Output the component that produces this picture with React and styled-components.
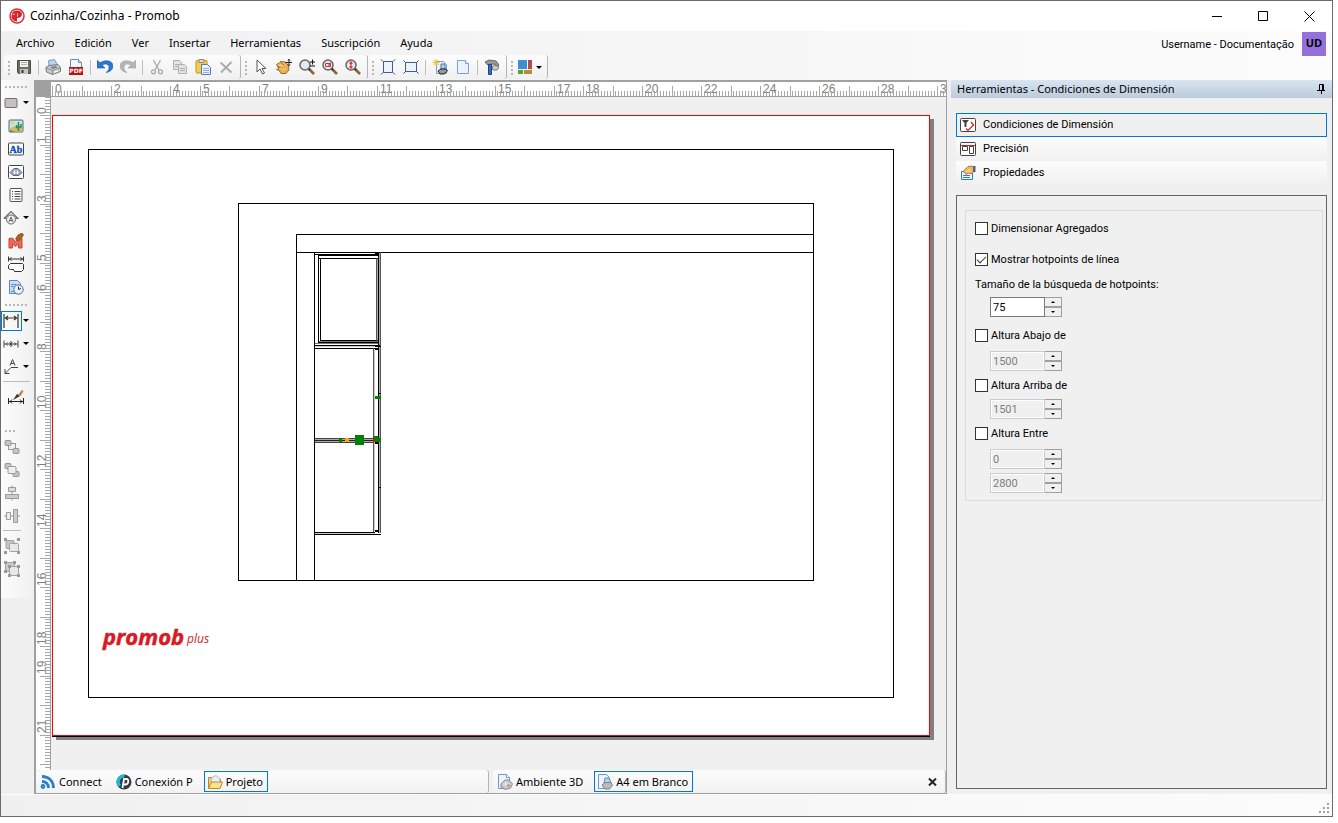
import React, { useState } from "react";
import styled, { createGlobalStyle, css } from "styled-components";

const GlobalStyle = createGlobalStyle`
  *, *::before, *::after {
    box-sizing: border-box;
  }
  body {
    margin: 0;
    background: #fff;
    color: #000;
    font: 11px/16px "Noto Sans", "Open Sans", sans-serif;
  }
  button, input {
    font: inherit;
    color: inherit;
  }
`;

const Page = styled.div`
  display: flex;
  min-height: 100vh;
  padding: 0 5px 6px 0;
`;

const Window = styled.main`
  flex: 1;
  min-width: 0;
  display: flex;
  flex-direction: column;
  border: 1px solid #6b6b6b;
  background: #f0f0f0;
`;

const TitleBar = styled.header`
  display: flex;
  align-items: center;
  height: 30px;
  padding-left: 8px;
  background: #fff;
`;

const Title = styled.h1`
  flex: 1;
  margin: 0 0 0 5px;
  font-size: 12px;
  font-weight: normal;
`;

const WindowButton = styled.button`
  display: grid;
  place-items: center;
  width: 46px;
  height: 30px;
  padding: 0;
  border: 0;
  background: none;
`;

const TopArea = styled.div`
  display: flex;
  justify-content: space-between;
  height: 49px;
  background: linear-gradient(90deg, #f0f0f0, #fcfcfc);
`;

const MenuBar = styled.nav`
  display: flex;
  height: 24px;
  padding-left: 5px;
`;

const MenuItem = styled.button`
  padding: 0 10px;
  border: 0;
  background: none;
  white-space: nowrap;
`;

const User = styled.div`
  display: flex;
  align-items: flex-start;
  gap: 8px;
  padding: 1px 6px 0 0;
  font: 11px/26px Roboto, "Liberation Sans", sans-serif;
`;

const Avatar = styled.span`
  width: 24px;
  height: 24px;
  background: #9370db;
  font: bold 11px/22px "Open Sans", sans-serif;
  text-align: center;
`;

const ToolRow = styled.div`
  display: flex;
  height: 25px;
  padding: 0 0 1px 3px;
`;

const ToolGroup = styled.div`
  display: flex;
  align-items: center;
  padding: 0 3px 0 8px;
  border-right: 1px solid #b4b4b4;
  border-radius: 3px;
  background: linear-gradient(#fcfcfc, #f0f0f0) no-repeat;
  position: relative;

  &::before {
    content: "";
    position: absolute;
    left: 4px;
    top: 6px;
    width: 2px;
    height: 14px;
    background: repeating-linear-gradient(#b8b8b8 0 2px, transparent 2px 4px);
  }
`;

const ToolButton = styled.button`
  display: flex;
  align-items: center;
  justify-content: center;
  gap: 3px;
  width: ${props => props.$width || 23}px;
  height: 23px;
  padding: 0;
  border: 0;
  background: none;
`;

const ToolSeparator = styled.span`
  width: 1px;
  height: 15px;
  margin: 0 2px 0 3px;
  background: #bdbdbd;
`;

const Caret = styled.span`
  border: 3px solid transparent;
  border-top-color: #000;
  border-bottom: 0;
`;

const Body = styled.div`
  flex: 1;
  min-height: 0;
  display: flex;
`;

const SideTools = styled.aside`
  width: 33px;
  flex: none;
`;

const SideGroup = styled.div`
  position: relative;
  padding: 11px 0 ${props => props.$bottom}px;
  border-radius: 0 3px 3px 0;
  background: linear-gradient(90deg, #fcfcfc, #f0f0f0);

  &:not(:first-child) {
    padding-top: 9px;
  }
  &::before {
    content: "";
    position: absolute;
    left: 4px;
    top: ${props => (props.$first ? 6 : 4)}px;
    width: ${props => props.$grip}px;
    height: 2px;
    background: repeating-linear-gradient(90deg, #b8b8b8 0 2px, transparent 2px 4px);
  }
`;

const SideButton = styled.button`
  display: flex;
  align-items: center;
  width: 32px;
  height: 23px;
  padding: 0;
  border: 0;
  background: none;
  ${props =>
    props.$menu &&
    css`
      gap: 1px;
    `}
  ${props =>
    !props.$menu &&
    css`
      padding-left: ${props.$left ? 3 : 7}px;
    `}
`;

const SideIcon = styled.span`
  display: flex;
  align-items: center;
  justify-content: center;
  width: 21px;
  height: 20px;
  padding-right: 2px;
  border: 1px solid ${props => (props.$selected ? "#0078d7" : "transparent")};
`;

const SideSeparator = styled.hr`
  width: ${props => props.$width}px;
  margin: 3px 2px;
  border: 0;
  border-top: 1px solid #bdbdbd;
`;

const Workspace = styled.section`
  flex: 1;
  min-width: 0;
  display: grid;
  grid-template-columns: 15px minmax(0, 1fr);
  grid-template-rows: 15px minmax(0, 1fr) 23px;
  margin-right: 4px;
  border: solid #a0a0a0;
  border-width: 2px 1px 1px 2px;
`;

const RulerCorner = styled.div`
  background: #a0a0a0;
`;

const RulerSvg = styled.svg`
  display: block;
  width: 100%;
  height: 100%;
  overflow: hidden;
  background: #fff;
  border: 0 solid #a0a0a0;
  border-bottom-width: ${props => (props.$vertical ? 0 : 1)}px;
  border-right-width: ${props => (props.$vertical ? 1 : 0)}px;
  font: 12px "Liberation Sans", Arial, sans-serif;
`;

const Canvas = styled.div`
  display: flex;
  padding: 18px 16px 34px 1px;
`;

const Sheet = styled.div`
  flex: 1;
  min-width: 0;
  border: 1px solid #f00;
  background: #fff;
  box-shadow: 0 1px 0 #000, 4px 4px 0 #808080;

  svg {
    display: block;
    width: 100%;
    height: 100%;
  }
`;

const DocTabs = styled.div`
  grid-column: 1 / -1;
  display: flex;
  gap: 4px;
`;

const DocTabGroup = styled.div`
  flex: 1;
  display: flex;
  align-items: center;
  gap: 6px;
  padding: 0 8px 0 1px;
  border-right: 1px solid #b4b4b4;
  border-radius: 3px;
  background: linear-gradient(#fcfcfc, #f2f2f2);
`;

const DocTab = styled.button`
  display: flex;
  align-items: center;
  gap: 3px;
  height: 21px;
  padding: 0 4px 0 2px;
  border: 1px solid ${props => (props.$active ? "#0078d7" : "transparent")};
  background: none;
  white-space: nowrap;
`;

const CloseDoc = styled.button`
  display: flex;
  margin-left: auto;
  padding: 0;
  border: 0;
  background: none;
`;

const Panel = styled.aside`
  flex: none;
  display: flex;
  flex-direction: column;
  width: 381px;
`;

const PanelHeader = styled.div`
  display: flex;
  align-items: center;
  justify-content: space-between;
  height: 18px;
  padding: 0 6px;
  background: linear-gradient(#d8e4f1, #bccbda);
`;

const PanelTitle = styled.h2`
  margin: 0;
  font-size: 11px;
  font-weight: normal;
`;

const PinButton = styled.button`
  display: flex;
  padding: 0;
  border: 0;
  background: none;
`;

const PanelTabs = styled.div`
  margin: 15px 5px 10px;
`;

const PanelTab = styled.button`
  display: flex;
  align-items: center;
  gap: 7px;
  width: 100%;
  height: 24px;
  padding: 0 3px;
  border: 1px solid ${props => (props.$active ? "#0078d7" : "transparent")};
  background: ${props =>
    props.$active ? "#f0f0f0" : "linear-gradient(#fcfcfc, #f0f0f0) border-box"};
  font: 11px/16px Roboto, "Liberation Sans", sans-serif;
  text-align: left;
`;

const PanelBody = styled.div`
  flex: 1;
  margin: 0 5px 5px;
  padding: 14px 3px 14px 8px;
  border: 1px solid #646464;
`;

const Group = styled.fieldset`
  min-width: 0;
  margin: 0;
  padding: 8px 9px 7px;
  border: 1px solid #dcdcdc;
  font: 11px/14px Roboto, "Liberation Sans", sans-serif;
`;

const CheckLabel = styled.label`
  display: flex;
  align-items: center;
  gap: 3px;
  height: 19px;
  margin-top: ${props => props.$gap || 0}px;
`;

const CheckInput = styled.input`
  appearance: none;
  display: grid;
  place-items: center;
  width: 13px;
  height: 13px;
  margin: 0;
  border: 1px solid #333;
  background: #fff;

  &:checked::before {
    content: "";
    width: 9px;
    height: 5px;
    margin-top: -3px;
    border: solid #333;
    border-width: 0 0 1px 1px;
    transform: rotate(-45deg);
  }
`;

const FieldLabel = styled.label`
  display: block;
  margin-top: 9px;
`;

const Spinner = styled.div`
  display: grid;
  grid-template: 10px 10px / 55px 17px;
  margin: ${props => props.$gap}px 0 0 15px;
`;

const SpinnerInput = styled.input`
  grid-row: 1 / 3;
  min-width: 0;
  padding: 1px 2px 0;
  border: 1px solid #7a7a7a;
  border-radius: 0;
  background: #fff;
  font-size: 11px;

  &:disabled {
    border-color: #ccc;
    background: #f0f0f0;
    box-shadow: inset 0 0 0 1px #fff;
    color: #7d7d7d;
  }
`;

const SpinnerButton = styled.button`
  display: grid;
  place-items: center;
  padding: 0;
  border: 1px solid #a0a0a0;
  border-left: 0;
  background: #f0f0f0;

  &::before {
    content: "";
    border: 2px solid transparent;
    border-bottom-color: ${props => (props.$down ? "transparent" : "#000")};
    border-top-color: ${props => (props.$down ? "#000" : "transparent")};
    border-top-width: ${props => (props.$down ? 2 : 0)}px;
    border-bottom-width: ${props => (props.$down ? 0 : 2)}px;
  }
`;

const StatusBar = styled.footer`
  display: flex;
  align-items: flex-end;
  justify-content: flex-end;
  height: 22px;
  padding: 2px 2px 2px 0;
  border-top: 1px solid #fff;
  background: linear-gradient(90deg, #f0f0f0, #fcfcfc);
`;

const printer = (
  <>
    <path d="M4 7 3.500 1.500 9.500.5l3 5.500" fill="#b9d5f5" stroke="#7b9cc4" />
    <path d="M.8 8.500 4 6.500l9-1 2.500 3v4l-8 3-6-2.500z" fill="#c9cacc" stroke="#77797c" />
    <path d="M1 9l6.500 2.500L15 9M7.500 11.500V15" stroke="#8b8d90" fill="none" />
    <path d="M5 8l6-1 1.500 1.500-5 1.500z" fill="#7b7f84" />
    <path d="M9 12.500l4-1.500v1.500l-4 1.500z" fill="#f5f5f5" />
  </>
);

const lens = (
  <>
    <path d="M10 10l5 5" stroke="#8a6538" strokeWidth="2.600" />
    <path d="M9.500 9.500l1.500 1.500" stroke="#333" strokeWidth="2" />
    <circle cx="6" cy="6" r="5" fill="#e4ebf0" stroke="#666" strokeWidth="1.500" />
  </>
);

const docShape = (
  <>
    <path d="M2.500 1.500h8l3 3v10h-11z" fill="#eaf2fc" stroke="#7f9fd0" />
    <path d="M10.500 1.500v3h3" fill="#fff" stroke="#7f9fd0" />
  </>
);

const shapes = {
  logo: (
    <>
      <circle cx="8" cy="8" r="7" fill="#fff" stroke="#d9303a" strokeWidth="1.500" />
      <path d="M8 2.500a5.500 5.500 0 0 0-2.500 10.400L8 13.500V10c3 0 5-1.500 5-4 0-2-2-3.500-5-3.500z" fill="#d7262f" />
      <path d="M3.500 6l2.500.5M8.500 5.500v3" stroke="#f6b9bc" fill="none" />
    </>
  ),
  save: (
    <>
      <path d="M1.500 1.500h13v13h-12l-1-1z" fill="#6d6d64" stroke="#4a4a44" />
      <path d="M4 2h8v6H4z" fill="#f1f3ef" />
      <path d="M5 3.500h6M5 5.500h6" stroke="#aeb4ac" />
      <path d="M4 10h8v5H4z" fill="#c4c7c0" />
      <path d="M5.500 11h2v3h-2z" fill="#333" />
    </>
  ),
  print: printer,
  pdf: (
    <>
      <path d="M2.500.5h8l3 3v8h-11z" fill="#f3f8ff" stroke="#5b8fc8" />
      <path d="M10.500.5v3h3" fill="#cfe0f5" stroke="#5b8fc8" />
      <path d="M1 8h14v8H1z" fill="#c01010" />
      <text x="8" y="14" fontSize="6" fontWeight="bold" fontFamily="DejaVu Sans" textAnchor="middle" fill="#fff">PDF</text>
    </>
  ),
  undo: (
    <path d="M0 1v8h8L5.500 6.500C8 4 12 5 12 8.500c0 2.500-1.500 4-3 5 4-.5 7-3 7-6.500C16 2 9 0 3 3.800z" fill="#2b78cf" stroke="#1c5ca8" strokeWidth=".6" />
  ),
  redo: (
    <path d="M16 1v8H8l2.500-2.500C8 4 4 5 4 8.500c0 2.500 1.500 4 3 5C3 13 0 10.500 0 7 0 2 7 0 13 3.800z" fill="#b5b5b5" stroke="#a2a2a2" strokeWidth=".6" />
  ),
  cut: (
    <g fill="none" stroke="#aaa" strokeWidth="1.300">
      <path d="M4.500 1l5.500 10M11.500 1L6 11" />
      <circle cx="4.500" cy="12.800" r="2" />
      <circle cx="11.500" cy="12.800" r="2" />
    </g>
  ),
  copy: (
    <g fill="#e3e3e3" stroke="#b0b0b0">
      <path d="M1.500 1.500h6l2 2v7h-8z" />
      <path d="M6.500 5.500h6l2 2v7h-8z" />
      <path d="M8 9.500h5M8 11.500h5M3 5.500h3M3 7.500h3" />
    </g>
  ),
  paste: (
    <>
      <rect x="1" y="1.500" width="11" height="12.500" rx="1" fill="#f4cd4b" stroke="#c59225" />
      <path d="M4 .5h5v3H4z" fill="#ddd" stroke="#888" />
      <path d="M6.500 5.500h6l3 3v7h-9z" fill="#e9f2fd" stroke="#5979b7" />
      <path d="M8 9.500h6M8 11.500h6M8 13.500h6" stroke="#91afe0" />
    </>
  ),
  remove: <path d="M2.500 3.500l11 10M13.500 3L3 13.500" stroke="#aaa" strokeWidth="1.800" fill="none" />,
  pointer: <path d="M4 1v12l3-3 2.500 5 2-1L9 9.500h4z" fill="#fff" stroke="#555" />,
  hand: (
    <>
      <path d="M.5 5.500l3-1.500 1-1.500 5 .5 3 4 .5 4-3 3.500H5L3 11.500.5 10.500 3 9.500z" fill="#eaae50" stroke="#96601c" strokeWidth=".9" />
      <path d="M2 6l4 1.500M3.500 4.500L7.500 7M6 3.500L9 6.500M3.500 9.500L6 9M6 12l4-3" stroke="#f9d898" fill="none" />
      <path d="M1.500 7.500L5 8.500M4.500 3.500L8 6" stroke="#7d4d14" strokeWidth=".7" fill="none" />
      <path d="M13 0v7M9.500 3.500h7M12 1.500l1-1 1 1M12 5.500l1 1 1-1" stroke="#222" fill="none" />
    </>
  ),
  zoomBoth: (
    <>
      {lens}
      <path d="M11 3h5M13.500.5v5M11 7h5" stroke="#111" fill="none" />
    </>
  ),
  zoomArea: (
    <>
      {lens}
      <path d="M3.500 4.500h5v3h-5zM6 6h3M8 3.500v3" stroke="#c33" fill="none" />
    </>
  ),
  zoomFit: (
    <>
      {lens}
      <path d="M6 3v6M4.500 4.500L6 3l1.500 1.500M4.500 7.500L6 9l1.500-1.500" stroke="#e33" strokeWidth="1.300" fill="none" />
    </>
  ),
  frameTall: (
    <>
      <path d="M3.500 2.500h9v11h-9z" fill="#eef3fb" stroke="#3d5d94" />
      <path d="M1 .5l2 2M15 .5l-2 2M1 15.500l2-2M15 15.500l-2-2" stroke="#253f70" />
    </>
  ),
  frameWide: (
    <>
      <path d="M2.500 3.500h11v9h-11z" fill="#eef3fb" stroke="#3d5d94" />
      <path d="M.5 1.500l2 2M15.500 1.500l-2 2M.5 14.500l2-2M15.500 14.500l-2-2" stroke="#253f70" />
    </>
  ),
  newView: (
    <>
      <path d="M4.500 2.500h7l3 3v9h-10z" fill="#e8f1fc" stroke="#7f9fd0" />
      <path d="M4 0v7M.5 3.500h7M1.500 1l5 5M6.500 1l-5 5" stroke="#edc52c" />
      <path d="M9 5h4v5H9z" fill="#b9d0ef" stroke="#536f9c" />
      <path d="M6 12l3-2h5l1.500 2-3.500 3H8z" fill="#999" stroke="#222" />
    </>
  ),
  doc: docShape,
  hammer: (
    <>
      <path d="M1 3l4-2 7 1 3 4-2 1-2-2-8 .5z" fill="#999" stroke="#666" />
      <path d="M8 8l3-2 4 2-2 3H9z" fill="#ccc" stroke="#777" />
      <path d="M4.500 5.500h3v10h-3z" fill="#3b6ac0" stroke="#1d4288" />
    </>
  ),
  colors: (
    <>
      <path d="M1 1h9v9H1z" fill="#3e8ed3" />
      <path d="M11 1h4v9h-4z" fill="#b9484b" />
      <path d="M1 11h5v4H1z" fill="#53a52d" />
      <path d="M7 11h8v4H7z" fill="#b98a3e" />
    </>
  ),
  box: <rect x="2" y="3.500" width="12" height="9" rx="1" fill="#c4c2bf" stroke="#707070" />,
  image: (
    <>
      <rect x="1" y="2" width="14" height="12" rx="1" fill="#bfe3f8" stroke="#567" />
      <circle cx="4.500" cy="5" r="1.800" fill="#f7d43c" />
      <path d="M1.500 11l5-3 4 2 4-1v4.500h-13z" fill="#dcb565" />
      <path d="M10.500 4v9M8.500 7v2.500h2M13 6v3h-2.500" stroke="#2f8f3a" strokeWidth="1.500" fill="none" />
      <path d="M1.500 12l6 2h-6z" fill="#3b9a42" />
    </>
  ),
  label: (
    <>
      <rect x=".5" y="2" width="15" height="12" rx="1" fill="#fff" stroke="#444" />
      <text x="8" y="12" fontSize="10" fontWeight="bold" fontFamily="Liberation Serif" textAnchor="middle" fill="#1550b0" stroke="#1550b0" strokeWidth=".4">Ab</text>
    </>
  ),
  view: (
    <>
      <rect x=".5" y="1.500" width="15" height="13" rx="1" fill="#fff" stroke="#444" />
      <path d="M2 8.500l4-4h4l4 4-3 3H5z" fill="#9dabc4" stroke="#5b6574" />
      <path d="M5 8.500h6M6.500 6v4M9.500 6v4" stroke="#eee" />
    </>
  ),
  list: (
    <>
      <rect x="2" y="1.500" width="12" height="13" rx="1" fill="#fff" stroke="#555" />
      <path d="M4 4.500h1M4 7h1M4 9.500h1M4 12h1M6.500 4.500h6M6.500 7h6M6.500 9.500h6M6.500 12h6" stroke="#444" />
    </>
  ),
  elevation: (
    <g fill="none" stroke="#666">
      <path d="M1 8.500L8 1.500l7 7h-2.500M1 8.500h2.500" strokeWidth="1.200" />
      <circle cx="8" cy="9.500" r="4.500" fill="#eee" />
      <path d="M6 12l2-5 2 5M6.500 10.500h3" />
    </g>
  ),
  material: (
    <>
      <path d="M1 15V5.500l3.500-.5 3 4 3-4 3.500.5V15h-3.500v-4l-3 2.500-3-2.500v4z" fill="#ec6a5d" stroke="#c94237" />
      <path d="M7.500 6L10 2l4-2 1.500 2-2 3-3 3z" fill="#a46722" stroke="#704411" strokeWidth=".7" />
    </>
  ),
  dimShape: (
    <g fill="none" stroke="#333">
      <path d="M.5.5v5M15.500.5v5M1 3h14M3.500 1.500L1.500 3l2 1.500M12.500 1.500l2 1.500-2 1.500" />
      <path d="M2.500 7.500h12l1 1v5l-2 2h-7l-1-2h-3l-2-1v-3z" fill="#fff" />
    </g>
  ),
  history: (
    <>
      <path d="M1.500 1.500h8l3 3v10h-11z" fill="#c9def7" stroke="#6384b9" />
      <path d="M3 5.500h5M3 7.500h3M3 12.500h3" stroke="#5d8ed0" />
      <circle cx="10.500" cy="10.500" r="4.700" fill="#e5f1fc" stroke="#4d6b94" />
      <path d="M10.500 7.500v3l2.500-1" stroke="#234" fill="none" />
    </>
  ),
  dimension: (
    <path d="M1 1v14M15 1v14M2 5h12M5 3L2.500 5 5 7M11 3l2.500 2L11 7" fill="none" stroke="#333" strokeWidth="1.200" />
  ),
  chain: (
    <path d="M1 4.500v7M8 5v6M15 4.500v7M1 8h14M4.500 6.500L3 8l1.500 1.500M6.500 6.500L8 8l-1.500 1.500M9.500 6.500L8 8l1.500 1.500M11.500 6.500L13 8l-1.500 1.500" fill="none" stroke="#444" />
  ),
  leader: (
    <path d="M7 6.500l2.500-6 2.500 6M8 4.500h3M15 8.500H8l-6 6M2 10v4.500h4.500" fill="none" stroke="#444" />
  ),
  editDim: (
    <>
      <path d="M.5 9v6M15.500 9v6M1 12.500h14M4 10.500l-2 2 2 2M12 10.500l2 2-2 2" fill="none" stroke="#222" />
      <path d="M5 11l4-6 3 2z" fill="#333" />
      <path d="M10 6l4-5 1.500 1-3 5z" fill="#c37b43" />
    </>
  ),
  front: (
    <g stroke="#999" fill="#c4c4c4">
      <rect x="4.500" y="4.500" width="7" height="6" fill="#efefef" />
      <rect x="1" y="1.500" width="6" height="5" rx="1" />
      <rect x="9" y="9.500" width="6" height="5" rx="1" />
    </g>
  ),
  back: (
    <g stroke="#999" fill="#c4c4c4">
      <rect x="1" y="1.500" width="6" height="5" rx="1" />
      <rect x="9" y="9.500" width="6" height="5" rx="1" />
      <rect x="4" y="4.500" width="8" height="7" rx="1" fill="#eee" />
    </g>
  ),
  alignH: (
    <g stroke="#999">
      <path d="M8 .5v15" />
      <path d="M4.500 2.500h7v4h-7z" fill="#ddd" />
      <path d="M1.500 9.500h13v4h-13z" fill="#ccc" />
    </g>
  ),
  alignV: (
    <g stroke="#999">
      <path d="M0 8h16" />
      <path d="M2.500 4.500h4v7h-4z" fill="#eee" />
      <path d="M9.500 1.500h4v13h-4z" fill="#ccc" />
    </g>
  ),
  group: (
    <g stroke="#a2a2a2">
      <rect x="2" y="2.500" width="8" height="8" rx="1" fill="#c4c4c4" />
      <rect x="5.500" y="5.500" width="9" height="8" rx="1" fill="#e8e8e8" />
      <path d="M0 1.500h3M13 1.500h3M0 14.500h3M13 14.500h3" strokeWidth="3" stroke="#999" />
    </g>
  ),
  ungroup: (
    <g stroke="#a2a2a2">
      <path d="M1.500 1.500h9v9h-9z" fill="#ccc" />
      <path d="M5.500 5.500h9v9h-9z" fill="#e8e8e8" />
      <path d="M0 1.500h3M9 1.500h3M0 10.500h3M4 5.500h3M13 5.500h3M4 14.500h3M13 14.500h3" strokeWidth="3" stroke="#999" />
    </g>
  ),
  feed: (
    <g fill="none" stroke="#2b80cc" strokeWidth="2.800">
      <path d="M2 2.500c7 0 11.500 4.500 11.500 11.500M2 7.500c4 0 6.500 2.500 6.500 6.500" />
      <circle cx="3" cy="12.500" r="1" />
    </g>
  ),
  connectP: (
    <>
      <circle cx="8" cy="8" r="7.500" fill="#333a45" />
      <path d="M9 .5A7.500 7.500 0 0 0 2.500 13L5 11a4.500 4.500 0 0 1 3-7.500z" fill="#1db9d4" />
      <path d="M6.500 14L8 5h2.500c3 0 2 5.500-1 5.500H8" fill="none" stroke="#fff" strokeWidth="1.800" />
    </>
  ),
  folder: (
    <>
      <path d="M1.500 14V3.500h4l1 1.500h7v3" fill="#f2d271" stroke="#b68a2a" />
      <path d="M4 4l5-2.500L13 5v5H5z" fill="#eaf1fa" stroke="#96a8c0" strokeWidth=".8" />
      <path d="M1.500 14.500l3-6.500h11l-2.500 6.500z" fill="#fbe385" stroke="#b68a2a" />
    </>
  ),
  scene: (
    <>
      <path d="M1.500.5h8l3 3v11h-11z" fill="#edf4fd" stroke="#7695c9" />
      <path d="M9.500.5v3h3" fill="#fff" stroke="#7695c9" />
      <path d="M4 10l4-4h4l3.500 4-2 4-5 1.500L4 13z" fill="#c5c8cc" stroke="#878b91" />
      <path d="M6 10h7M9 7.500v5" stroke="#eef" />
      <path d="M10 10.500h3v2h-3z" fill="#cd8f58" />
    </>
  ),
  layout: (
    <>
      <path d="M1.500.5h8l3 3v11h-11z" fill="#edf4fd" stroke="#7695c9" />
      <path d="M8 4h4l2 5H7z" fill="#b8d2f1" stroke="#6887b2" />
      <path d="M5 11l3-2.500h6l1.500 3-3 3.500H8z" fill="#b9bbbd" stroke="#7d8085" />
    </>
  ),
  condition: (
    <>
      <rect x=".5" y="1.500" width="15" height="13" rx="1" fill="#fff" stroke="#444" />
      <path d="M2 3h7L6.500 6v4h-2V6z" fill="#444" />
      <path d="M6 11.500l2 2 6-6M11 5l3 3.500" stroke="#c22" strokeWidth="1.200" fill="none" />
    </>
  ),
  precision: (
    <>
      <rect x=".5" y="1.500" width="15" height="13" rx="1" fill="#fff" stroke="#444" />
      <path d="M2.500 5.500h5v4h-5zM9.500 5.500h4v7h-4z" fill="none" stroke="#444" />
      <path d="M1 4.500h14" stroke="#c22" />
    </>
  ),
  properties: (
    <>
      <path d="M1.500 6.500h11v8h-11z" fill="#eef6ff" stroke="#2a7fd3" />
      <path d="M3 10.500h7M3 12.500h7" stroke="#2a7fd3" />
      <path d="M3 6.500l5-5 4-.5 1.500 1v5l-2 2L9 8 6 9.500 5 8z" fill="#f0b75b" stroke="#9d6a25" strokeWidth=".8" />
      <path d="M13 1h2.500v6H13z" fill="#55607a" />
      <path d="M6 7l4-3M8 7.500L11 5" stroke="#ffe3a8" />
    </>
  )
};

const Icon = ({ name, size = 16 }) => (
  <svg width={size} height={size} viewBox="0 0 16 16" fill="none" aria-hidden="true">
    {shapes[name]}
  </svg>
);

const menus = ["Archivo", "Edición", "Ver", "Insertar", "Herramientas", "Suscripción", "Ayuda"];

const toolbars = [
  ["save", "|", "print", "pdf", "|", "undo", "redo", "|", "cut", "copy", "paste", "remove"],
  ["pointer", "hand", "zoomBoth", "zoomArea", "zoomFit"],
  ["frameTall", "frameWide", "|", "newView", "doc", "|", "hammer"]
];

const sideGroups = [
  {
    grip: 22,
    bottom: 2,
    items: ["box+", "image", "label", "view", "list", "elevation+", "material", "dimShape", "history"]
  },
  { grip: 22, bottom: 18, separator: 27, items: ["dimension+", "chain+", "leader+", "|", "editDim"] },
  {
    grip: 10,
    bottom: 18,
    left: true,
    separator: 18,
    items: ["front", "back", "alignH", "alignV", "|", "group", "ungroup"]
  }
];

const UNIT = 29.5;
const hLabels = [0, 2, 4, 5, 7, 9, 11, 13, 15, 17, 18, 20, 22, 24, 26, 28, 30];
const vLabels = [0, 1, 3, 5, 6, 8, 10, 12, 14, 16, 18, 19, 21];

const makeTicks = (start, from, to) => {
  const ticks = [];
  for (let i = from; i <= to; i++) {
    ticks.push({ at: Math.round(start + (i * UNIT) / 10), major: i % 10 === 0 });
  }
  return ticks;
};

const HorizontalRuler = () => (
  <RulerSvg aria-hidden="true">
    {hLabels.map(n => (
      <text key={n} x={Math.round(4 + n * UNIT)} y="11" fill="#808080">
        {n}
      </text>
    ))}
    <g fill="#a8a8a8">
      {makeTicks(1, 0, 700).map(({ at, major }) => (
        <rect key={at} x={at} y={major ? 4 : 9} width="1" height={major ? 10 : 5} />
      ))}
    </g>
  </RulerSvg>
);

const VerticalRuler = () => (
  <RulerSvg $vertical aria-hidden="true">
    {vLabels.map(n => (
      <text
        key={n}
        transform={`translate(10 ${Math.floor(17 + n * UNIT)}) rotate(-90)`}
        fill="#808080"
      >
        {n}
      </text>
    ))}
    <g fill="#a8a8a8">
      {makeTicks(18, -6, 400).map(({ at, major }) => (
        <rect key={at} y={at} x={major ? 4 : 9} height="1" width={major ? 10 : 5} />
      ))}
    </g>
  </RulerSvg>
);

const Drawing = () => (
  <svg viewBox="53 116 876 619" role="img" aria-label="Planta">
    <g fill="none" stroke="#777" shapeRendering="crispEdges">
      <path d="M319 341.500h59M314 343.500h66" />
      <path d="M379.500 253v280M377.500 259v81" stroke="#aaa" />
      <path d="M374.500 350v181M315 346.500h60M315 533.500h60" stroke="#ccc" />
      <path d="M315 438.500h59M315 442.500h59" stroke="#444" />
      <path d="M315 439.500h59M315 441.500h59" stroke="#aaa" />
      <path d="M315 440.500h59" stroke="#222" />
    </g>
    <g fill="none" stroke="#000" shapeRendering="crispEdges">
      <path d="M88.500 149.500h805v548h-805z" />
      <path d="M238.500 203.500h575v377h-575z" />
      <path d="M813.500 234.500h-517v346M813.500 252.500h-517M314.500 252.500v328" />
      <path d="M314.500 254.500h64M318.500 255.500h60v87h-60zM320.500 258.500v82" />
      <path d="M318 258.500h60M320 340.500h58M314.500 345.500h66M314.500 348.500h60" />
      <path d="M378.500 252v281M314.500 532.500h60M314.500 534.500h66" />
      <path d="M376.500 258v84M373.500 348v184M380.500 252v281" stroke="#555" />
      <path d="M375 253h3M375 349h3M375 346h3M375 443h3M375 531h3" strokeWidth="2" />
      <path d="M378 346.500h3M378 393.500h3M378 487.500h3" />
    </g>
    <g fill="#008000" shapeRendering="crispEdges">
      <path d="M375 396h6v3h-6zM339 438h3v4h-3zM355 435h9v10h-9zM373 436h5v3h-5zM375 438h6v4h-6z" />
      <path d="M345 438h4v4h-4z" fill="#ffa500" />
      <path d="M373 439h2v3h-2z" fill="#f00" />
    </g>
    <g fill="#d81a24" fontStyle="italic">
      <text x="103" y="645" fontFamily="Open Sans" fontWeight="bold" fontSize="22" stroke="#d81a24" strokeWidth=".5">
        promob
      </text>
      <text x="187" y="643" fontFamily="Open Sans" fontSize="12">
        plus
      </text>
    </g>
  </svg>
);

const NumberField = ({ id, label, initial, gap, disabled }) => {
  const [value, setValue] = useState(initial);
  return (
    <Spinner $gap={gap}>
      <SpinnerInput
        id={id}
        aria-label={label}
        value={value}
        disabled={disabled}
        onChange={event => setValue(parseInt(event.target.value) || 0)}
      />
      <SpinnerButton aria-label="Aumentar" disabled={disabled} onClick={() => setValue(value + 1)} />
      <SpinnerButton
        $down
        aria-label="Disminuir"
        disabled={disabled}
        onClick={() => setValue(value - 1)}
      />
    </Spinner>
  );
};

const Check = ({ children, gap, checked, onChange }) => (
  <CheckLabel $gap={gap}>
    <CheckInput type="checkbox" checked={checked} onChange={event => onChange(event.target.checked)} />
    {children}
  </CheckLabel>
);

const DimensionForm = () => {
  const [state, setState] = useState({ hotpoints: true });
  const bind = key => ({
    checked: !!state[key],
    onChange: checked => setState({ ...state, [key]: checked })
  });

  return (
    <Group>
      <Check {...bind("aggregates")}>Dimensionar Agregados</Check>
      <Check gap={12} {...bind("hotpoints")}>Mostrar hotpoints de línea</Check>
      <FieldLabel htmlFor="hotpoint-size">Tamaño de la búsqueda de hotpoints:</FieldLabel>
      <NumberField id="hotpoint-size" initial={75} gap={5} disabled={!state.hotpoints} />
      <Check gap={9} {...bind("below")}>Altura Abajo de</Check>
      <NumberField label="Altura Abajo de" initial={1500} gap={6} disabled={!state.below} />
      <Check gap={5} {...bind("above")}>Altura Arriba de</Check>
      <NumberField label="Altura Arriba de" initial={1501} gap={4} disabled={!state.above} />
      <Check gap={5} {...bind("between")}>Altura Entre</Check>
      <NumberField label="Altura mínima" initial={0} gap={6} disabled={!state.between} />
      <NumberField label="Altura máxima" initial={2800} gap={4} disabled={!state.between} />
    </Group>
  );
};

const panelTabs = [
  { icon: "condition", text: "Condiciones de Dimensión" },
  { icon: "precision", text: "Precisión" },
  { icon: "properties", text: "Propiedades" }
];

const App = () => {
  const [tab, setTab] = useState(0);

  return (
    <Page>
      <GlobalStyle />
      <Window>
        <TitleBar>
          <Icon name="logo" />
          <Title>Cozinha/Cozinha - Promob</Title>
          <WindowButton aria-label="Minimizar">
            <svg width="11" height="11" stroke="#000"><path d="M0 5.500h10" /></svg>
          </WindowButton>
          <WindowButton aria-label="Maximizar">
            <svg width="11" height="11" stroke="#000" fill="none"><path d="M.5.5h9v9h-9z" /></svg>
          </WindowButton>
          <WindowButton aria-label="Cerrar">
            <svg width="11" height="11" stroke="#000"><path d="M.5.5l10 10M10.500.5l-10 10" /></svg>
          </WindowButton>
        </TitleBar>

        <TopArea>
          <div>
            <MenuBar>
              {menus.map(text => (
                <MenuItem key={text}>{text}</MenuItem>
              ))}
            </MenuBar>
            <ToolRow>
              {toolbars.map((items, i) => (
                <ToolGroup key={i}>
                  {items.map((name, j) =>
                    name === "|" ? (
                      <ToolSeparator key={j} />
                    ) : (
                      <ToolButton key={j} aria-label={name}>
                        <Icon name={name} />
                      </ToolButton>
                    )
                  )}
                </ToolGroup>
              ))}
              <ToolGroup>
                <ToolButton $width={29} aria-label="colors">
                  <Icon name="colors" />
                  <Caret />
                </ToolButton>
              </ToolGroup>
            </ToolRow>
          </div>
          <User>
            Username - Documentação
            <Avatar>UD</Avatar>
          </User>
        </TopArea>

        <Body>
          <SideTools>
            {sideGroups.map(({ grip, bottom, left, separator, items }, i) => (
              <SideGroup key={i} $first={i === 0} $grip={grip} $bottom={bottom}>
                {items.map((item, j) => {
                  if (item === "|") return <SideSeparator key={j} $width={separator} />;
                  const menu = item.endsWith("+");
                  const name = item.replace("+", "");
                  return (
                    <SideButton key={j} $menu={menu} $left={left} aria-label={name}>
                      {menu ? (
                        <>
                          <SideIcon $selected={name === "dimension"}>
                            <Icon name={name} />
                          </SideIcon>
                          <Caret />
                        </>
                      ) : (
                        <Icon name={name} />
                      )}
                    </SideButton>
                  );
                })}
              </SideGroup>
            ))}
          </SideTools>

          <Workspace>
            <RulerCorner />
            <HorizontalRuler />
            <VerticalRuler />
            <Canvas>
              <Sheet>
                <Drawing />
              </Sheet>
            </Canvas>
            <DocTabs>
              <DocTabGroup>
                <DocTab><Icon name="feed" />Connect</DocTab>
                <DocTab><Icon name="connectP" />Conexión P</DocTab>
                <DocTab $active><Icon name="folder" />Projeto</DocTab>
              </DocTabGroup>
              <DocTabGroup>
                <DocTab><Icon name="scene" />Ambiente 3D</DocTab>
                <DocTab $active><Icon name="layout" />A4 em Branco</DocTab>
                <CloseDoc aria-label="Cerrar documento">
                  <svg width="9" height="8" stroke="#222" strokeWidth="2"><path d="M1 .5l7 7M8 .5l-7 7" /></svg>
                </CloseDoc>
              </DocTabGroup>
            </DocTabs>
          </Workspace>

          <Panel>
            <PanelHeader>
              <PanelTitle>Herramientas - Condiciones de Dimensión</PanelTitle>
              <PinButton aria-label="Fijar panel">
                <svg width="9" height="10" fill="none" stroke="#000">
                  <path d="M2.500 6V.5h4V6M5.500 1v5M0 6.500h8M4.500 7v3" />
                </svg>
              </PinButton>
            </PanelHeader>
            <PanelTabs>
              {panelTabs.map(({ icon, text }, i) => (
                <PanelTab key={icon} $active={tab === i} onClick={() => setTab(i)}>
                  <Icon name={icon} />
                  {text}
                </PanelTab>
              ))}
            </PanelTabs>
            <PanelBody>
              <DimensionForm />
            </PanelBody>
          </Panel>
        </Body>

        <StatusBar>
          <svg width="11" height="11" fill="#a0a0a0" aria-hidden="true">
            <path d="M8 0h2v2H8zM4 4h2v2H4zM8 4h2v2H8zM0 8h2v2H0zM4 8h2v2H4zM8 8h2v2H8z" />
          </svg>
        </StatusBar>
      </Window>
    </Page>
  );
};

export default App;
